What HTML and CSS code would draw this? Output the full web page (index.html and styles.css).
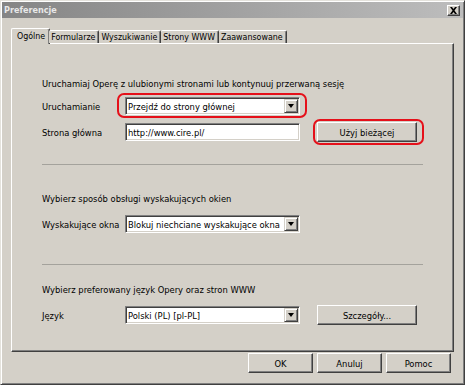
FILE: index.html
```html
<!DOCTYPE html>
<html lang="pl">
<head>
  <meta charset="UTF-8" />
  <title>Preferencje</title>
  <link rel="stylesheet" href="styles.css">
</head>
<body>
  <div class="window">
    <div class="titlebar">
      <span class="title">Preferencje</span>
      <span class="close" aria-label="Zamknij">
        <svg width="9" height="7" viewBox="0 0 9 7"><path d="M1 0h2l1.5 2 1.5-2h2l-2.5 3.5 2.5 3.5h-2l-1.5-2-1.5 2h-2l2.5-3.5z" fill="#000"/></svg>
      </span>
    </div>

    <div class="body">
      <div class="tabs">
        <div class="tab active">Ogólne</div>
        <div class="tab">Formularze</div>
        <div class="tab">Wyszukiwanie</div>
        <div class="tab">Strony WWW</div>
        <div class="tab">Zaawansowane</div>
      </div>

      <div class="panel">
        <div class="group first">
          <p class="intro">Uruchamiaj Operę z ulubionymi stronami lub kontynuuj przerwaną sesję</p>
          <div class="row">
            <span class="label">Uruchamianie</span>
            <div class="mark mark-select">
              <div class="select"><span class="value">Przejdź do strony głównej</span><span class="arrow"></span></div>
            </div>
          </div>
          <div class="row row-second">
            <span class="label">Strona główna</span>
            <div class="input">http://www.cire.pl/</div>
            <div class="mark mark-btn">
              <button class="btn wide">Użyj bieżącej</button>
            </div>
          </div>
        </div>

        <div class="sep"></div>

        <div class="group">
          <p class="intro">Wybierz sposób obsługi wyskakujących okien</p>
          <div class="row">
            <span class="label">Wyskakujące okna</span>
            <div class="select"><span class="value">Blokuj niechciane wyskakujące okna</span><span class="arrow"></span></div>
          </div>
        </div>

        <div class="sep"></div>

        <div class="group last">
          <p class="intro">Wybierz preferowany język Opery oraz stron WWW</p>
          <div class="row">
            <span class="label">Język</span>
            <div class="select"><span class="value">Polski (PL) [pl-PL]</span><span class="arrow"></span></div>
            <button class="btn wide">Szczegóły...</button>
          </div>
        </div>
      </div>

      <div class="actions">
        <button class="btn">OK</button>
        <button class="btn">Anuluj</button>
        <button class="btn">Pomoc</button>
      </div>
    </div>
  </div>
</body>
</html>
```

FILE: styles.css
```css
* { box-sizing: border-box; }
html, body {
  margin: 0;
  padding: 0;
}
body {
  font-family: "DejaVu Sans Condensed", "DejaVu Sans", sans-serif;
  font-size: 9.3px;
  color: #000;
  background: #d4d0c8;
}

.window {
  width: 465px;
  height: 385px;
  padding: 1px;
  border: 1px solid;
  border-color: #e4e2dc #404040 #404040 #e4e2dc;
  box-shadow: inset 1px 1px #fff, inset -1px -1px #808080;
  background: #d4d0c8;
  display: flex;
  flex-direction: column;
}

.titlebar {
  height: 16px;
  display: flex;
  align-items: center;
  justify-content: space-between;
  padding: 0 3px 0 2px;
  background: linear-gradient(to right, #858585, #bdbdbd);
}
.title {
  font-weight: bold;
  font-size: 9px;
  color: #e8e8e8;
}
.close {
  width: 13px;
  height: 11px;
  display: flex;
  align-items: center;
  justify-content: center;
  background: #d4d0c8;
  border: 1px solid;
  border-color: #fff #404040 #404040 #fff;
  box-shadow: inset -1px -1px #808080;
}

.body {
  flex-grow: 1;
  padding: 10px 0 0 9px;
}

.tabs {
  display: flex;
  height: 15px;
  position: relative;
  z-index: 1;
}
.tab {
  height: 13px;
  margin-top: 2px;
  padding: 0 3px 0 2px;
  font-size: 8.8px;
  line-height: 13px;
  border: 1px solid;
  border-bottom: none;
  border-color: #fff #404040 #fff #fff;
  border-radius: 2px 2px 0 0;
  box-shadow: inset -1px 0 #808080;
  background: #d4d0c8;
}
.tab.active {
  height: 16px;
  margin-top: 0;
  margin-right: -1px;
  padding: 1px 4px 0 5px;
}
.tab + .tab {
  border-left: none;
}

.panel {
  width: 443px;
  height: 309px;
  border: 1px solid;
  border-color: #fff #404040 #404040 #fff;
  box-shadow: inset -1px -1px #808080;
  padding: 0 30px;
}

.intro {
  margin: 0;
  height: 13px;
  line-height: 13px;
  white-space: nowrap;
}
.group.first { padding-top: 33px; }
.group.first .row { margin-top: 6px; }
.group { padding-top: 27px; }
.group .row { margin-top: 9px; }
.group.last { padding-top: 18px; }

.row {
  display: flex;
  align-items: center;
  height: 20px;
}
.label {
  width: 83px;
  flex-shrink: 0;
  white-space: nowrap;
}

.sep {
  height: 1px;
  width: 381px;
  background: #a4a29c;
}
.group + .sep { margin-top: 30px; }
.group.first + .sep { margin-top: 22px; }

.select, .input {
  width: 175px;
  height: 18px;
  background: #fff;
  border: 1px solid;
  border-color: #808080 #fff #fff #808080;
  box-shadow: inset 1px 1px #404040, inset -1px -1px #d4d0c8;
  display: flex;
  align-items: center;
  padding: 0 2px;
  white-space: nowrap;
}
.select { padding-right: 1px; }
.select .value {
  flex-grow: 1;
  overflow: hidden;
}
.arrow {
  width: 14px;
  height: 14px;
  flex-shrink: 0;
  background: #d4d0c8;
  border: 1px solid;
  border-color: #d4d0c8 #404040 #404040 #d4d0c8;
  box-shadow: inset 1px 1px #fff, inset -1px -1px #808080;
  position: relative;
}
.arrow::after {
  content: "";
  position: absolute;
  left: 3px;
  top: 4px;
  border-left: 3.5px solid transparent;
  border-right: 3.5px solid transparent;
  border-top: 4px solid #000;
}

.btn {
  font-family: inherit;
  font-size: 9.3px;
  width: 65px;
  height: 20px;
  padding: 0;
  background: #d4d0c8;
  border: 1px solid;
  border-color: #fff #404040 #404040 #fff;
  box-shadow: inset -1px -1px #808080;
  color: #000;
}
.btn.wide {
  width: 100px;
  margin-left: 17px;
}
.mark .btn.wide { margin-left: 0; }

.mark {
  position: relative;
}
.mark::after {
  content: "";
  position: absolute;
  border: 2px solid #e5101a;
  border-radius: 7px;
}
.mark-select::after {
  top: -4px;
  bottom: -3px;
  left: -8px;
  right: -7px;
}
.mark-btn {
  margin-left: 17px;
}
.mark-btn::after {
  top: -3px;
  bottom: -3px;
  left: -4px;
  right: -7px;
}

.actions {
  display: flex;
  justify-content: flex-end;
  gap: 4px;
  margin-top: 1px;
  padding-right: 12px;
}
```
